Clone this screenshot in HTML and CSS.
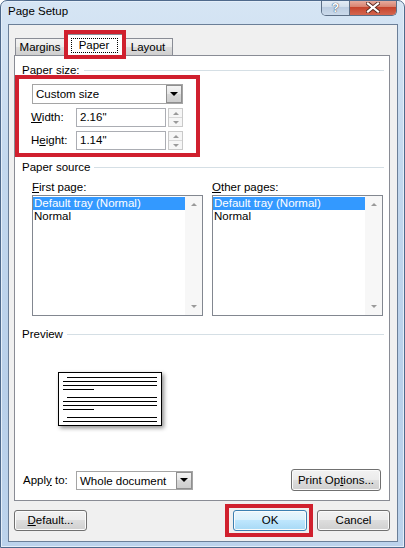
FILE: index.html
```html
<!DOCTYPE html>
<html>
<head>
 <meta charset="UTF-8">
 <title>Page Setup</title>
 <link rel="stylesheet" href="styles.css">
</head>
<body>
<div class="window">
  <div class="titlebar">
    <div class="title">Page Setup</div>
    <div class="caption">
      <div class="cap help">?</div>
      <div class="cap close">
        <svg width="14" height="11" viewBox="0 0 14 11">
          <path d="M2 1.5 L12 9.5 M12 1.5 L2 9.5" stroke="#5a2a22" stroke-width="4" stroke-linecap="square"/>
          <path d="M2 1.5 L12 9.5 M12 1.5 L2 9.5" stroke="#fff" stroke-width="2.2" stroke-linecap="square"/>
        </svg>
      </div>
    </div>
  </div>

  <div class="client">
    <div class="tabs">
      <div class="tab margins">Margins</div>
      <div class="tab active"><span class="focus">Paper</span></div>
      <div class="tab layout">Layout</div>
    </div>

    <div class="panel">
      <div class="group-title">Paper size:</div>
      <div class="size-group">
        <div class="combo size-combo">
          <span class="combo-text">Custom size</span>
          <span class="drop"><i class="tri"></i></span>
        </div>
        <div class="field-row">
          <label class="field-label"><u>W</u>idth:</label>
          <div class="input">2.16"</div>
          <div class="spin"><span class="up"></span><span class="down"></span></div>
        </div>
        <div class="field-row">
          <label class="field-label">H<u>e</u>ight:</label>
          <div class="input">1.14"</div>
          <div class="spin"><span class="up"></span><span class="down"></span></div>
        </div>
      </div>

      <div class="group-title source-title">Paper source</div>
      <div class="sources">
        <div class="source">
          <div class="source-label"><u>F</u>irst page:</div>
          <div class="listbox">
            <div class="items">
              <div class="item selected">Default tray (Normal)</div>
              <div class="item">Normal</div>
            </div>
            <div class="scroll"><span class="up"></span><span class="down"></span></div>
          </div>
        </div>
        <div class="source">
          <div class="source-label"><u>O</u>ther pages:</div>
          <div class="listbox">
            <div class="items">
              <div class="item selected">Default tray (Normal)</div>
              <div class="item">Normal</div>
            </div>
            <div class="scroll"><span class="up"></span><span class="down"></span></div>
          </div>
        </div>
      </div>

      <div class="group-title preview-title">Preview</div>
      <svg class="preview" width="110" height="60" viewBox="0 0 110 60">
        <rect x="0.5" y="0.5" width="103" height="53" fill="#fff" stroke="#000"/>
        <g stroke="#000" stroke-width="1">
          <path d="M9 5.5H99 M5 9.5H99 M5 13.5H99 M5 17.5H36"/>
          <path d="M9 25.5H99 M5 29.5H99 M5 33.5H99 M5 37.5H36"/>
          <path d="M9 45.5H99 M5 49.5H99"/>
        </g>
      </svg>

      <div class="apply-row">
        <label class="apply-label">Appl<u>y</u> to:</label>
        <div class="combo apply-combo">
          <span class="combo-text">Whole document</span>
          <span class="drop"><i class="tri"></i></span>
        </div>
        <div class="btn print-btn">Print Op<u>t</u>ions...</div>
      </div>
    </div>

    <div class="buttons">
      <div class="btn"><u>D</u>efault...</div>
      <div class="btn ok">OK</div>
      <div class="btn cancel">Cancel</div>
    </div>
  </div>
</div>
</body>
</html>
```

FILE: styles.css
```css
* { box-sizing: border-box; }
body { margin: 0; font-family: "Liberation Sans", Arial, sans-serif; font-size: 11.5px;
  color: #000; background: #fff; }
u { text-decoration: underline; text-underline-offset: 1px; }

/* window frame */
.window { width: 405px; height: 548px; display: flex; flex-direction: column;
  background: linear-gradient(#d6e5f4, #c3d8ee 30%, #b9d0ea 70%, #bcd3ec);
  border: 1px solid #4f6a8c; border-radius: 7px 7px 0 0;
  box-shadow: inset 0 0 0 1px #e4eef9; overflow: hidden; }
.titlebar { height: 23px; display: flex; align-items: flex-start; padding-left: 7px; }
.title { padding-top: 3px; line-height: 14px; }
.caption { margin: -1px 7px 0 auto; display: flex; height: 16px;
  border: 1px solid #5d6f86; border-top: none; border-radius: 0 0 5px 5px; overflow: hidden; }
.cap { display: flex; align-items: center; justify-content: center; }
.help { width: 28px; border-right: 1px solid #5d6f86;
  background: linear-gradient(#e6eef7, #d3dfec 45%, #bccde1 50%, #cbdaeb);
  color: #fff; font-weight: bold; font-size: 12px;
  text-shadow: 0 0 1px #34475e, 0 0 1px #34475e; }
.close { width: 46px;
  background: linear-gradient(#eab2a6, #d98370 45%, #c6442d 50%, #d4664f); }

/* client area */
.client { margin: 0 6px 0 7px; height: 518px; background: #f0f0f0;
  border: 1px solid #6b7f98; padding: 9px 0 0 5px; }

.tabs { display: flex; align-items: flex-end; height: 21px; padding-left: 1px;
  position: relative; z-index: 1; }
.tab { height: 17px; line-height: 16px; text-align: center;
  border: 1px solid #898c95; border-bottom: none;
  background: linear-gradient(#f3f3f3, #ebebeb 50%, #dddddd 50%, #cfcfcf); }
.margins { width: 49px; border-right: none; }
.layout { width: 49px; border-left: none; }
.tab.active { width: 60px; height: 22px; margin-bottom: -1px; background: #fff;
  padding-top: 2px; position: relative; }
.tab.active::after { content: ""; position: absolute; top: -5px; left: -1px; right: -3px;
  bottom: -3px; border: 4px solid #d0202e; }
.focus { display: inline-block; width: 47px; line-height: 13px; border: 1px dotted #000; }

.panel { width: 376px; height: 446px; background: #fff; border: 1px solid #898c95;
  padding: 7px 5px 9px 7px; display: flex; flex-direction: column; }
.group-title { display: flex; align-items: center; gap: 4px; line-height: 14px; height: 14px; }
.group-title::after { content: ""; flex: 1; height: 1px; background: #d5dfe5; }

/* paper size */
.size-group { margin: 7px 0 0 10px; width: 151px; position: relative; }
.size-group::after { content: ""; position: absolute; top: -9px; bottom: -7px;
  left: -17px; right: -17px; border: 4px solid #d0202e; }
.combo { display: flex; height: 20px; border: 1px solid #a5a5a5; background: #fff; }
.combo-text { padding-left: 3px; line-height: 18px; }
.drop { margin-left: auto; width: 16px; height: 18px; border: 1px solid #8f8f8f;
  background: linear-gradient(#f4f4f4, #e6e6e6 50%, #d8d8d8 50%, #cdcdcd);
  display: flex; align-items: center; justify-content: center; }
.tri { width: 0; height: 0; border-left: 4px solid transparent;
  border-right: 4px solid transparent; border-top: 4px solid #000; }

.field-row { display: flex; height: 19px; margin-top: 4px; }
.field-label { width: 45px; margin-left: -1px; line-height: 19px; }
.input { width: 90px; border: 1px solid #abadb3; padding-left: 3px; line-height: 17px; }
.spin { width: 15px; margin-left: 2px; border: 1px solid #c9c9c9; display: flex;
  flex-direction: column; background: #f6f6f6; }
.spin span { flex: 1; display: flex; align-items: center; justify-content: center; }
.spin span + span { border-top: 1px solid #d8d8d8; }
.spin .up::before, .scroll .up::before { content: ""; border-left: 3px solid transparent;
  border-right: 3px solid transparent; border-bottom: 3px solid #9a9a9a; }
.spin .down::before, .scroll .down::before { content: ""; border-left: 3px solid transparent;
  border-right: 3px solid transparent; border-top: 3px solid #9a9a9a; }

/* paper source */
.source-title { margin-top: 10px; }
.sources { display: flex; gap: 9px; margin: 6px 0 0 10px; }
.source-label { line-height: 14px; }
.listbox { width: 171px; height: 121px; margin-top: 1px; border: 1px solid #828790;
  display: flex; }
.items { flex: 1; padding-top: 1px; }
.item { line-height: 13px; padding-left: 1px; }
.item.selected { background: #3399ff; color: #fff; }
.scroll { width: 17px; background: #f7f7f7; display: flex; flex-direction: column;
  justify-content: space-between; }
.scroll span { height: 17px; display: flex; align-items: center; justify-content: center; }

/* preview */
.preview-title { margin-top: 11px; }
.preview { margin: 31px 0 0 36px; filter: drop-shadow(2px 2px 2px rgba(0,0,0,.45)); }

.apply-row { margin-top: auto; display: flex; align-items: center; height: 22px; }
.apply-label { width: 53px; margin-left: 1px; }
.apply-combo { width: 117px; height: 19px; }
.apply-combo .drop { height: 17px; }
.print-btn { margin: 0 3px 0 auto; width: 90px; }

/* buttons */
.btn { height: 22px; line-height: 20px; text-align: center; border: 1px solid #707070;
  border-radius: 3px; box-shadow: inset 0 0 0 1px #fbfbfb;
  background: linear-gradient(#f2f2f2, #ebebeb 50%, #dddddd 50%, #cfcfcf); }
.buttons { display: flex; width: 376px; margin-top: 9px; }
.buttons .btn { width: 73px; height: 21px; line-height: 19px; }
.buttons .ok { margin-left: auto; width: 74px; position: relative; border-color: #3c7fb1;
  background: linear-gradient(#eaf6fd, #d9f0fc 50%, #bee6fd 50%, #a7d9f5); }
.ok::after { content: ""; position: absolute; top: -7px; bottom: -7px; left: -9px;
  right: -7px; border: 4px solid #d0202e; }
.buttons .cancel { margin-left: 10px; }
```
